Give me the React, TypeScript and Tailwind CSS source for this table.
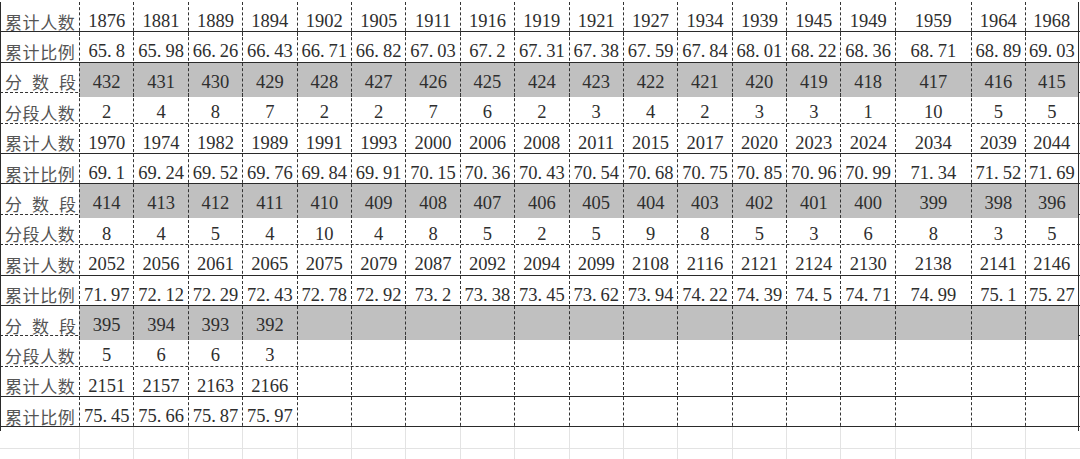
const cols = 'grid grid-cols-[79px_repeat(15,54.4px)_76px_54px_54px]';

const rows: { label: string; values: string[]; gray?: boolean; line: 'solid' | 'dashed' }[] = [
  { label: '累计人数', line: 'solid', values: ['1876', '1881', '1889', '1894', '1902', '1905', '1911', '1916', '1919', '1921', '1927', '1934', '1939', '1945', '1949', '1959', '1964', '1968'] },
  { label: '累计比例', line: 'solid', values: ['65.8', '65.98', '66.26', '66.43', '66.71', '66.82', '67.03', '67.2', '67.31', '67.38', '67.59', '67.84', '68.01', '68.22', '68.36', '68.71', '68.89', '69.03'] },
  { label: '分数段', gray: true, line: 'dashed', values: ['432', '431', '430', '429', '428', '427', '426', '425', '424', '423', '422', '421', '420', '419', '418', '417', '416', '415'] },
  { label: '分段人数', line: 'dashed', values: ['2', '4', '8', '7', '2', '2', '7', '6', '2', '3', '4', '2', '3', '3', '1', '10', '5', '5'] },
  { label: '累计人数', line: 'solid', values: ['1970', '1974', '1982', '1989', '1991', '1993', '2000', '2006', '2008', '2011', '2015', '2017', '2020', '2023', '2024', '2034', '2039', '2044'] },
  { label: '累计比例', line: 'solid', values: ['69.1', '69.24', '69.52', '69.76', '69.84', '69.91', '70.15', '70.36', '70.43', '70.54', '70.68', '70.75', '70.85', '70.96', '70.99', '71.34', '71.52', '71.69'] },
  { label: '分数段', gray: true, line: 'dashed', values: ['414', '413', '412', '411', '410', '409', '408', '407', '406', '405', '404', '403', '402', '401', '400', '399', '398', '396'] },
  { label: '分段人数', line: 'dashed', values: ['8', '4', '5', '4', '10', '4', '8', '5', '2', '5', '9', '8', '5', '3', '6', '8', '3', '5'] },
  { label: '累计人数', line: 'solid', values: ['2052', '2056', '2061', '2065', '2075', '2079', '2087', '2092', '2094', '2099', '2108', '2116', '2121', '2124', '2130', '2138', '2141', '2146'] },
  { label: '累计比例', line: 'solid', values: ['71.97', '72.12', '72.29', '72.43', '72.78', '72.92', '73.2', '73.38', '73.45', '73.62', '73.94', '74.22', '74.39', '74.5', '74.71', '74.99', '75.1', '75.27'] },
  { label: '分数段', gray: true, line: 'dashed', values: ['395', '394', '393', '392'] },
  { label: '分段人数', line: 'dashed', values: ['5', '6', '6', '3'] },
  { label: '累计人数', line: 'solid', values: ['2151', '2157', '2163', '2166'] },
  { label: '累计比例', line: 'solid', values: ['75.45', '75.66', '75.87', '75.97'] },
];

// SimSun style wide period
const Num = ({ v }: { v: string }) => {
  if (!v.includes('.')) return <>{v}</>;
  const [a, b] = v.split('.');
  return (
    <>
      {a}
      <span className="mr-[4px]">.</span>
      {b}
    </>
  );
};

const Label = ({ text }: { text: string }) => {
  if (text === '分数段') {
    return (
      <div className="flex w-[71px] justify-between">
        {text.split('').map((c, i) => (
          <span key={i}>{c}</span>
        ))}
      </div>
    );
  }
  return <span className="tracking-[0.6px]">{text}</span>;
};

export default function App() {
  return (
    <div className="w-[1080px] h-[459px] overflow-hidden bg-white pt-[2px]">
      {rows.map((r, ri) => (
        <div
          key={ri}
          className={`${cols} h-[30.4px] border-b ${r.line === 'solid' ? 'border-solid border-[#2a2a2a]' : 'border-dashed border-[#333]'}`}
        >
          <div className="flex items-center border-l border-r border-solid border-l-[#2a2a2a] border-r-transparent pl-[4px] pt-[5px] text-[17px] text-[#555] font-['Noto_Sans_CJK_SC',sans-serif]">
            <Label text={r.label} />
          </div>
          {Array.from({ length: 18 }).map((_, ci) => {
            const v = r.values[ci];
            return (
              <div
                key={ci}
                className={`flex items-center justify-center pt-[6px] text-[18.5px] text-[#2e2e2e] font-['Liberation_Serif',serif] whitespace-nowrap ${
                  ci === 17 ? 'border-r border-solid border-[#2a2a2a]' : 'border-l border-dashed border-[#333]'
                } ${ci === 17 ? 'border-l border-l-[#333] [border-left-style:dashed]' : ''} ${r.gray ? 'bg-[#c0c0c0]' : ''}`}
              >
                {v ? <Num v={v} /> : null}
              </div>
            );
          })}
        </div>
      ))}
      {[0, 1].map((k) => (
        <div key={k} className={`${cols} h-[22px] border-b border-[#e3e3e3]`}>
          {Array.from({ length: 19 }).map((_, ci) => (
            <div key={ci} className={ci === 0 ? '' : 'border-l border-[#e3e3e3]'} />
          ))}
        </div>
      ))}
    </div>
  );
}
